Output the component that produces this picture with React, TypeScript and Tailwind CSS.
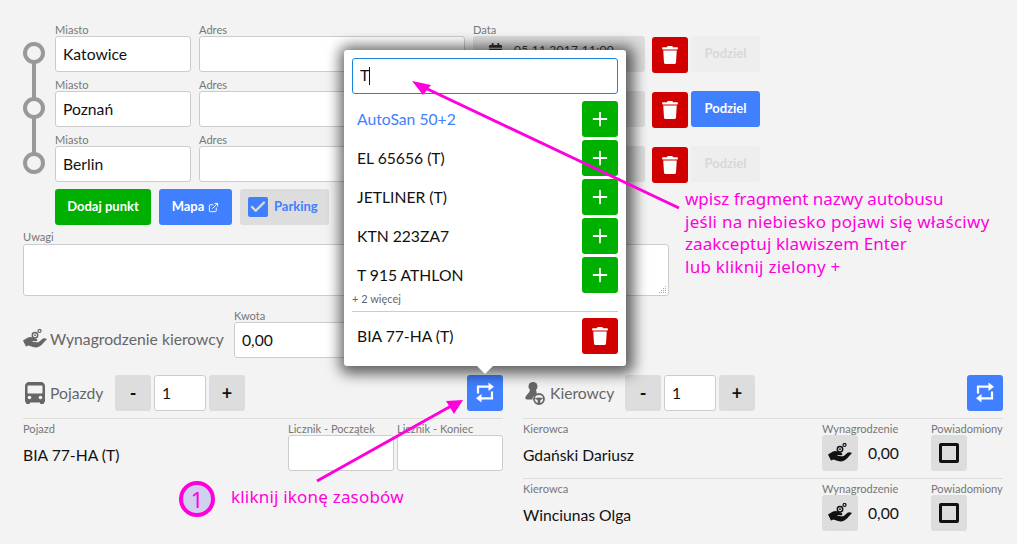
import { Check, ExternalLink, Plus } from "lucide-react";
import { FaCalendarAlt, FaTrash } from "react-icons/fa";
import type { ReactNode } from "react";

const fieldLabel = "block h-[11px] text-[11.1px] leading-[10px] text-[#777] whitespace-nowrap";
const inputBox = "h-9 rounded-[3px] border border-[#ccc] bg-white px-[7px] text-[15.7px] leading-[34px] text-[#111]";

function Field({ label, width, value }: { label: string; width: string; value?: string }) {
  return (
    <div className={width}>
      <span className={fieldLabel}>{label}</span>
      <div className={inputBox}>{value}</div>
    </div>
  );
}

function RepeatIcon() {
  return (
    <svg viewBox="0 0 36 36" className="h-9 w-9" fill="none" stroke="white" strokeWidth="2.2">
      <path d="M11 18.500V11.700H22" />
      <path d="M25 16.500V23.300H14" />
      <path d="M21.500 7.500l5.500 4.200-5.500 4.200z" fill="white" stroke="none" />
      <path d="M14.500 19.100l-5.500 4.200 5.500 4.200z" fill="white" stroke="none" />
    </svg>
  );
}

function HandCoins({ className }: { className: string }) {
  return (
    <svg viewBox="0 0 24 20" className={className} fill="currentColor">
      <circle cx="12" cy="6.200" r="2.700" fill="none" stroke="currentColor" strokeWidth="1.500" />
      <circle cx="12" cy="6.200" r="0.900" />
      <circle cx="16.500" cy="1.900" r="1.500" fill="none" stroke="currentColor" strokeWidth="1.200" />
      <path d="M0 11.500 5 8.500C7 7.500 9 8 11 9L13.500 10C15 10.800 14.500 12.500 13 12.300L9.500 12V12.800L13 13.300C15 13.500 16 13 17 12L19.500 9.800C20.800 8.800 22 9 24 10L19 15.500C16 18.500 13 19 10 18L5.500 16.500 3 17.500Z" />
    </svg>
  );
}

function BusIcon() {
  return (
    <svg viewBox="0 0 20 22" className="h-[22px] w-5" fill="#666">
      <path d="M4 0h12c2.200 0 4 1.800 4 4v15c0 .7-.4 1.200-1 1.500V21a1 1 0 0 1-1 1h-2a1 1 0 0 1-1-1v-.5H5v.5a1 1 0 0 1-1 1H2a1 1 0 0 1-1-1v-.5c-.6-.3-1-.8-1-1.500V4c0-2.200 1.800-4 4-4zm-1.500 4.500v6c0 .6.400 1 1 1h13c.6 0 1-.4 1-1v-6c0-.6-.4-1-1-1h-13c-.6 0-1 .4-1 1z" fillRule="evenodd" />
      <circle cx="4.500" cy="15.500" r="1.800" fill="#f3f3f3" />
      <circle cx="15.500" cy="15.500" r="1.800" fill="#f3f3f3" />
    </svg>
  );
}

function DriverIcon() {
  return (
    <svg viewBox="0 0 20 24" className="h-6 w-5" fill="#666">
      <circle cx="8" cy="5.500" r="4.500" />
      <path d="M5 9h6c.5 2 1 3 .5 4.500C9 14 7.500 16 7.500 18.500H2c-1.500 0-2-1.300-1.500-2.500C2 13 4.500 12 5 9z" />
      <circle cx="14" cy="18" r="5" fill="none" stroke="#666" strokeWidth="1.800" />
      <path d="M9.500 17.500c3-1.500 6-1.500 9 0l-3 1.500-.5 4h-2l-.5-4z" />
    </svg>
  );
}

function GreyButton({ children, className = "w-9" }: { children: ReactNode; className?: string }) {
  return (
    <div className={`flex h-9 items-center justify-center rounded-[3px] bg-[#ddd] text-[18px] font-bold text-[#111] ${className}`}>
      {children}
    </div>
  );
}

function BlueSwitch() {
  return (
    <div className="flex h-9 w-9 items-center justify-center rounded-[3px] bg-[#4080ff]">
      <RepeatIcon />
    </div>
  );
}

function Stepper() {
  return (
    <div className="flex gap-[3px]">
      <GreyButton>-</GreyButton>
      <div className={`${inputBox} w-[52px]`}>1</div>
      <GreyButton>+</GreyButton>
    </div>
  );
}

const cities = [
  { city: "Katowice", split: false },
  { city: "Poznań", split: true },
  { city: "Berlin", split: false },
];

function RouteRow({ city, split, index }: { city: string; split: boolean; index: number }) {
  return (
    <div className="flex h-[47px]">
      <div className="relative mt-[17px] h-[22px] w-[32px]">
        {index < 2 && <div className="absolute left-[9px] top-[20px] h-[37px] w-1 bg-[#999]" />}
        <div className="absolute left-0 top-0 h-[22px] w-[22px] rounded-full border-4 border-[#999]" />
      </div>
      <Field label="Miasto" width="w-[136px]" value={city} />
      <Field label="Adres" width="ml-2 w-[266px]" />
      <div className="ml-2 w-[172px]">
        <span className={fieldLabel}>{index === 0 ? "Data" : " "}</span>
        <div className="flex h-9 items-start gap-[11px] rounded-[3px] bg-[#ddd] pl-[15px] pt-[6px] text-[12px] leading-4 tracking-[0.3px] text-[#333]">
          <FaCalendarAlt size={15} className="mt-[1px]" />
          <span>05.11.2017 11:00</span>
        </div>
      </div>
      <div className="ml-[7px] mt-[12px] flex h-9 w-9 items-center justify-center rounded-[3px] bg-[#d00000] text-white">
        <FaTrash size={18} />
      </div>
      <div
        className={`ml-[3px] mt-[11px] flex h-9 w-[69px] items-center justify-center rounded-[3px] text-[13px] font-bold ${
          split ? "bg-[#4080ff] text-white" : "bg-[#eee] text-[#d8d8d8]"
        }`}
      >
        Podziel
      </div>
    </div>
  );
}

function VehicleColumn() {
  return (
    <div className="w-[480px]">
      <div className="flex h-9 items-center">
        <div className="ml-[2px] w-[25px]"><BusIcon /></div>
        <span className="w-[65px] pt-[2px] text-[15.7px] text-[#666]">Pojazdy</span>
        <Stepper />
        <div className="ml-auto"><BlueSwitch /></div>
      </div>
      <div className="mt-[7px] flex h-[60px] border-t border-[#ddd] pt-[5px]">
        <div className="w-[265px]">
          <span className={fieldLabel}>Pojazd</span>
          <p className="mt-[10px] text-[15.7px] leading-5 text-[#111]">BIA 77-HA (T)</p>
        </div>
        <Field label="Licznik - Początek" width="w-[106px]" />
        <Field label="Licznik - Koniec" width="ml-[3px] w-[106px]" />
      </div>
    </div>
  );
}

function DriverRow({ name }: { name: string }) {
  return (
    <div className="flex h-[60px] border-t border-[#ddd] pt-[5px]">
      <div className="w-[299px]">
        <span className={fieldLabel}>Kierowca</span>
        <p className="mt-[10px] text-[15.7px] leading-5 text-[#111]">{name}</p>
      </div>
      <div className="w-[109px]">
        <span className={fieldLabel}>Wynagrodzenie</span>
        <div className="flex items-center">
          <GreyButton><HandCoins className="h-5 w-6 text-[#111]" /></GreyButton>
          <span className="ml-[10px] pt-[2px] text-[15.7px] text-[#111]">0,00</span>
        </div>
      </div>
      <div>
        <span className={fieldLabel}>Powiadomiony</span>
        <GreyButton><div className="h-5 w-5 rounded-[2px] border-[3px] border-[#111]" /></GreyButton>
      </div>
    </div>
  );
}

function DriverColumn() {
  return (
    <div className="w-[480px]">
      <div className="flex h-9 items-center">
        <div className="ml-[2px] w-[25px]"><DriverIcon /></div>
        <span className="w-[75px] pt-[2px] text-[15.7px] text-[#666]">Kierowcy</span>
        <Stepper />
        <div className="ml-auto"><BlueSwitch /></div>
      </div>
      <div className="mt-[7px]">
        <DriverRow name="Gdański Dariusz" />
        <DriverRow name="Winciunas Olga" />
      </div>
    </div>
  );
}

const buses = ["AutoSan 50+2", "EL 65656 (T)", "JETLINER (T)", "KTN 223ZA7", "T 915 ATHLON"];

function BusPopup() {
  return (
    <div className="absolute left-[344px] top-[50px] h-[316px] w-[282px] rounded-[3px] bg-white p-2 shadow-[2px_2px_14px_6px_rgba(0,0,0,0.6)]">
      <div className="flex h-9 items-center rounded-[3px] border border-[#1a86e0] px-[7px] text-[15.7px] text-[#111]">
        T<span className="h-[18px] w-px bg-[#111]" />
      </div>
      <div className="mt-[7px] flex flex-col gap-[3px]">
        {buses.map((bus, i) => (
          <div key={bus} className="flex h-9 items-center justify-between pl-[5px]">
            <span className={`pt-[2px] text-[15.7px] ${i === 0 ? "text-[#4080ff]" : "text-[#111]"}`}>{bus}</span>
            <div className="flex h-9 w-9 items-center justify-center rounded-[3px] bg-[#00b000] text-white">
              <Plus size={22} strokeWidth={2} />
            </div>
          </div>
        ))}
      </div>
      <p className="text-[11px] leading-[11px] text-[#666]">+ 2 więcej</p>
      <div className="mt-[7px] border-t border-[#ccc] pt-[6px]">
        <div className="flex h-9 items-center justify-between pl-[5px]">
          <span className="pt-[2px] text-[15.7px] text-[#111]">BIA 77-HA (T)</span>
          <div className="flex h-9 w-9 items-center justify-center rounded-[3px] bg-[#d00000] text-white">
            <FaTrash size={18} />
          </div>
        </div>
      </div>
      <div className="absolute left-[133px] top-full h-0 w-0 border-x-[8px] border-t-[8px] border-x-transparent border-t-white" />
    </div>
  );
}

function Annotations() {
  return (
    <>
      <svg className="absolute left-0 top-0 h-[544px] w-[1017px]" viewBox="0 0 1017 544" fill="none">
        <path d="M679 208 420 85.500" stroke="#ff00dd" strokeWidth="3" />
        <path d="M412 81 431 85 423 95z" fill="#ff00dd" />
        <path d="M317 481 452 405.500" stroke="#ff00dd" strokeWidth="3" />
        <path d="M463 400 446 401 454 414z" fill="#ff00dd" />
      </svg>
      <div className="absolute left-[685px] top-[188px] font-['Noto_Sans',sans-serif] text-[17px] leading-[22.500px] text-[#ff00dd]">
        <p>wpisz fragment nazwy autobusu</p>
        <p className="tracking-[0.28px]">jeśli na niebiesko pojawi się właściwy</p>
        <p className="tracking-[0.1px]">zaakceptuj klawiszem Enter</p>
        <p className="tracking-[0.25px]">lub kliknij zielony +</p>
      </div>
      <div className="absolute left-[179px] top-[481px] flex h-9 w-9 items-center justify-center rounded-full border-4 border-[#ff00dd] bg-[#d0d0f0] font-['Noto_Sans',sans-serif] text-[22px] text-[#ff00dd]">
        1
      </div>
      <div className="absolute left-[231px] top-[485px] font-['Noto_Sans',sans-serif] text-[17px] leading-[24px] tracking-[0.2px] text-[#ff00dd]">
        kliknij ikonę zasobów
      </div>
    </>
  );
}

export default function App() {
  return (
    <div className="relative h-[544px] w-[1017px] overflow-hidden bg-[#f3f3f3] px-[23px] pt-[25px] font-['Lato',sans-serif]">
      <div className="flex flex-col gap-[8px]">
        {cities.map((c, i) => (
          <RouteRow key={c.city} city={c.city} split={c.split} index={i} />
        ))}
      </div>

      <div className="ml-8 mt-[7px] flex gap-2 text-[13px] font-bold text-white">
        <div className="flex h-9 w-24 items-center justify-center rounded-[3px] bg-[#00b000]">Dodaj punkt</div>
        <div className="flex h-9 w-[73px] items-center justify-center gap-1 rounded-[3px] bg-[#4080ff]">
          Mapa <ExternalLink size={11} />
        </div>
        <div className="flex h-9 w-[89px] items-center gap-[6px] rounded-[3px] bg-[#ddd] pl-2 text-[#4080ff]">
          <div className="flex h-5 w-5 items-center justify-center rounded-[2px] bg-[#4080ff]">
            <Check size={18} color="#ddd" strokeWidth={3} />
          </div>
          Parking
        </div>
      </div>

      <div className="mt-[7px] w-[646px]">
        <span className={fieldLabel}>Uwagi</span>
        <div className="relative mt-px h-[52px] rounded-[3px] border border-[#ccc] bg-white">
          <svg className="absolute bottom-px right-px h-2 w-2" viewBox="0 0 8 8" fill="#aaa">
            <rect x="6" y="0" width="1" height="1" />
            <rect x="4" y="2" width="1" height="1" />
            <rect x="6" y="2" width="1" height="1" />
            <rect x="2" y="4" width="1" height="1" />
            <rect x="4" y="4" width="1" height="1" />
            <rect x="6" y="4" width="1" height="1" />
            <rect x="0" y="6" width="1" height="1" />
            <rect x="2" y="6" width="1" height="1" />
            <rect x="4" y="6" width="1" height="1" />
            <rect x="6" y="6" width="1" height="1" />
          </svg>
        </div>
      </div>

      <div className="mt-[14px] flex h-[48px] items-end">
        <HandCoins className="mb-[9px] h-5 w-6 text-[#666]" />
        <span className="mb-[6px] ml-[3px] w-[184px] text-[15.7px] text-[#666]">Wynagrodzenie kierowcy</span>
        <Field label="Kwota" width="w-[136px]" value="0,00" />
      </div>

      <div className="mt-[17px] flex gap-5">
        <VehicleColumn />
        <DriverColumn />
      </div>

      <BusPopup />
      <Annotations />
    </div>
  );
}
